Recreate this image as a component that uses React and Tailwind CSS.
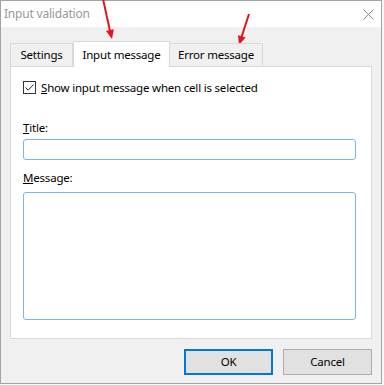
export default function App() {
  return (
    <div className="relative w-[384px] h-[385px] bg-[#f7f7f7] font-['Noto_Sans',sans-serif] text-[11.5px] tracking-[-0.2px] text-black overflow-hidden">
      {/* dialog window */}
      <div className="w-[382px] h-[384px] border border-[#a3a3a3] flex flex-col bg-[#f0f0f0]">
        {/* title bar */}
        <div className="h-[26px] bg-white flex items-center justify-between pl-[3px] pr-[7px]">
          <span className="text-[#999999] text-[12px]">Input validation</span>
          <svg width="11" height="11" viewBox="0 0 11 11" stroke="#8a8a8a" strokeWidth="1">
            <path d="M0.5 0.5 L10.5 10.5 M10.5 0.5 L0.5 10.5" />
          </svg>
        </div>

        <div className="flex-1 flex flex-col pl-[9px] pr-[9px] pt-[14px]">
          {/* tabs */}
          <div className="flex items-end h-[25px] relative z-10">
            <div className="h-[23px] w-[63px] flex items-center justify-center border border-b-0 border-[#d9d9d9] bg-[#f0f0f0]">
              Settings
            </div>
            <div className="h-[26px] w-[97px] -mb-px flex items-center justify-center border border-b-0 border-[#d9d9d9] bg-white">
              Input message
            </div>
            <div className="h-[23px] w-[93px] flex items-center justify-center border border-b-0 border-l-0 border-[#d9d9d9] bg-[#f0f0f0]">
              Error message
            </div>
          </div>

          {/* tab panel */}
          <div className="h-[273px] bg-white border border-[#d9d9d9] flex flex-col pl-[12px] pr-[15px] pt-[14px]">
            <label className="flex items-center gap-[5px] h-[13px]">
              <span className="w-[13px] h-[13px] border border-[#333333] bg-white flex items-center justify-center">
                <svg width="11" height="11" viewBox="0 0 11 11" fill="none" stroke="#222" strokeWidth="1">
                  <path d="M1.5 5.5 L4.2 8.2 L9.5 2.5" />
                </svg>
              </span>
              <span>
                <u>S</u>how input message when cell is selected
              </span>
            </label>

            <div className="mt-[26px] leading-[16px]">
              <u>T</u>itle:
            </div>
            <div className="mt-[3px] h-[21px] border border-[#7eb4ea] rounded-[3px]" />

            <div className="mt-[10px] leading-[16px]">
              <u>M</u>essage:
            </div>
            <div className="mt-[6px] h-[128px] border border-[#7eb4ea] rounded-[3px]" />
          </div>

          {/* buttons */}
          <div className="flex justify-end gap-[10px] mt-[10px]">
            <button className="w-[89px] h-[26px] border-2 border-[#0078d7] bg-[#e1e1e1]">
              OK
            </button>
            <button className="w-[89px] h-[26px] border border-[#adadad] bg-[#e1e1e1]">
              Cancel
            </button>
          </div>
        </div>
      </div>

      {/* red annotation arrows */}
      <svg className="absolute left-0 top-0 pointer-events-none" width="384" height="385">
        <line x1="103" y1="-1" x2="110" y2="31" stroke="#e3151c" strokeWidth="2" />
        <polygon points="112,39 113.8,29.3 106,31.1" fill="#e3151c" />
        <line x1="249" y1="14" x2="241.5" y2="37" stroke="#e3151c" strokeWidth="2" />
        <polygon points="239,45 245.6,37.6 238,35.2" fill="#e3151c" />
      </svg>
    </div>
  );
}
